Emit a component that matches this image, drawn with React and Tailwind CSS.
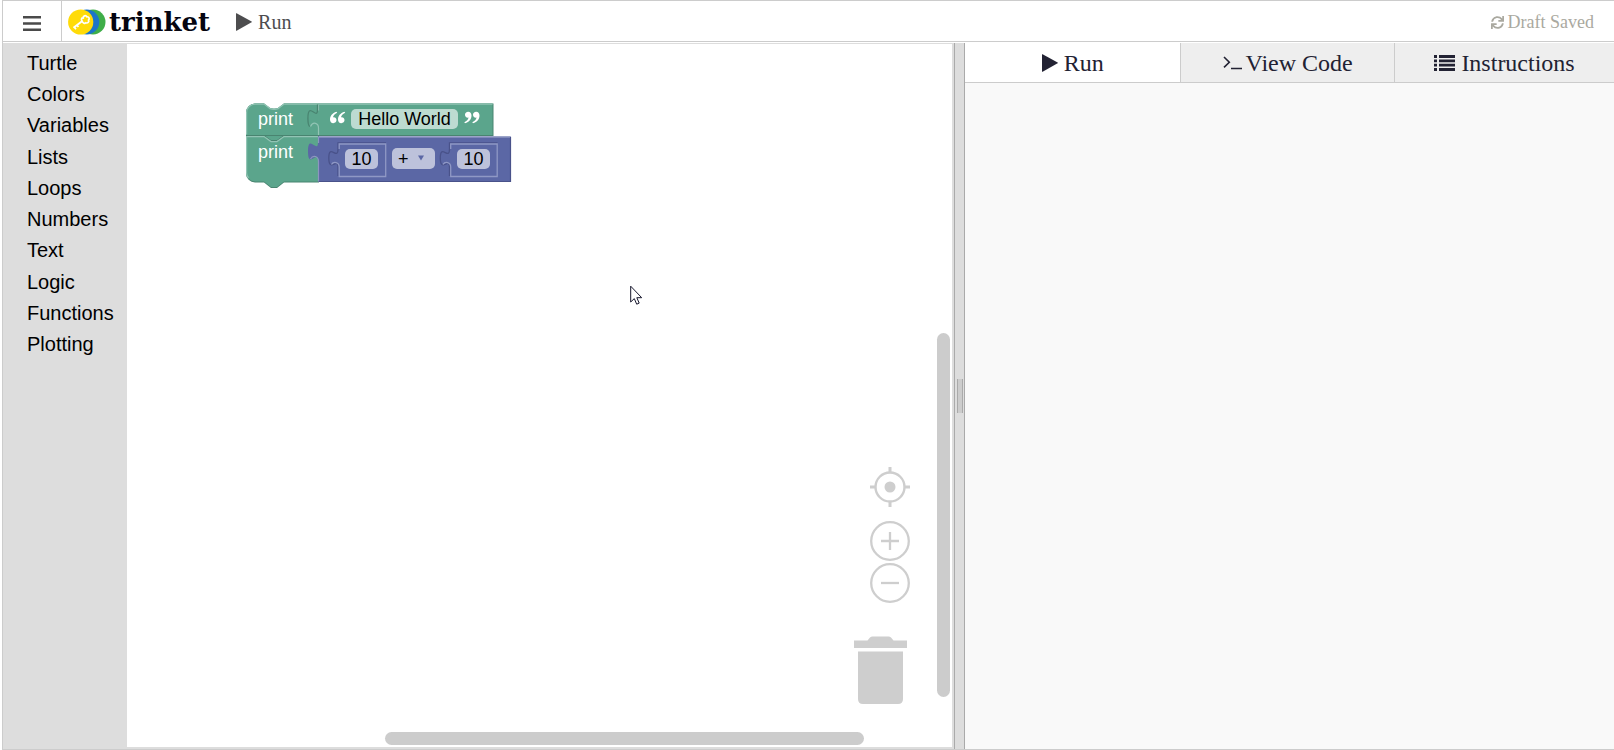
import React from 'react';
import { FaSync } from 'react-icons/fa';

const CATEGORIES = ['Turtle', 'Colors', 'Variables', 'Lists', 'Loops', 'Numbers', 'Text', 'Logic', 'Functions', 'Plotting'];

function PlayIcon({ className }) {
  return (
    <svg className={className} viewBox="0 0 16 18" fill="currentColor" aria-hidden="true">
      <path d="M0 .6Q0 0 .6.3L15.6 8.5q.5.4 0 .8L.6 17.7Q0 18 0 17.4Z" />
    </svg>
  );
}

function TerminalIcon() {
  return (
    <svg className="h-[14px] w-[19px]" viewBox="0 0 19 14" fill="none" stroke="currentColor" strokeWidth="1.6" aria-hidden="true">
      <path d="M1 1l5.3 5.2L1 11.4M8 12.5h11" />
    </svg>
  );
}

function ListIcon() {
  return (
    <svg className="h-[16px] w-[21px]" viewBox="0 0 21 16" fill="currentColor" aria-hidden="true">
      <path d="M0 0h3v3H0zM5 0h16v3H5zM0 4.4h3v2.8H0zM5 4.4h16v2.8H5zM0 8.7h3v2.8H0zM5 8.7h16v2.8H5zM0 13h3v3H0zM5 13h16v3H5z" />
    </svg>
  );
}

function Logo() {
  return (
    <a href="#home" className="flex items-center gap-[3px]">
      <svg className="h-[26px] w-[38px]" viewBox="0 0 38 26" aria-hidden="true">
        <circle cx="25" cy="13" r="12.5" fill="#3fae49" />
        <circle cx="18.8" cy="13" r="12.5" fill="#1b75c9" />
        <circle cx="12.7" cy="13" r="12.6" fill="#ffdb08" />
        <g fill="none" stroke="#fff">
          <path d="M14 12.2L5.500 18.800" strokeWidth="2" />
          <path d="M6.200 18l1.800 2.300M8.800 16l1.600 2.100" strokeWidth="1.700" />
          <path d="M14.200 12.200c-1.500-1.600-.6-3.500 1-3.200-.2-2.300 2.600-3.100 3.700-1.200 2.100-.3 3 2 1.600 3.300 1 1.900-1 3.500-2.700 2.600-1 1.200-2.900.5-3.600-1.500z" strokeWidth="1.700" />
        </g>
      </svg>
      <span className="font-['DejaVu_Serif',serif] text-[26px] leading-[40px] font-bold text-[#050510]">trinket</span>
    </a>
  );
}

function Header() {
  return (
    <header className="flex h-[42px] shrink-0 items-stretch border-y border-[#ccc] bg-white">
      <button type="button" aria-label="Menu" className="flex w-[59px] items-center justify-center border-r border-[#ccc] pt-1 text-[#4a4a4a]">
        <svg className="h-[15px] w-[18px]" viewBox="0 0 18 15" fill="currentColor" aria-hidden="true">
          <path d="M0 0h18v2.600H0zM0 6.200h18v2.600H0zM0 12.400h18V15H0z" />
        </svg>
      </button>
      <div className="flex items-center pt-px pl-[6px]">
        <Logo />
      </div>
      <button type="button" className="ml-[26px] flex items-center gap-[6px] pt-[2px] text-[20px] leading-6 text-[#4d4d4f]">
        <PlayIcon className="h-[18px] w-[16px]" />
        Run
      </button>
      <div className="ml-auto flex items-center gap-[4px] pt-[2px] pr-5 text-[18px] text-[#aaa9a0]">
        <FaSync className="size-[13px]" />
        Draft Saved
      </div>
    </header>
  );
}

function Toolbox() {
  return (
    <nav aria-label="Blocks" className="w-[124px] shrink-0 bg-[#ddd] pt-1">
      <ul className="flex h-[313px] flex-col">
        {CATEGORIES.map((name) => (
          <li key={name} className="flex flex-1 items-center">
            <button type="button" className="pl-6 font-['Liberation_Sans',sans-serif] text-[20px] leading-[30px] text-black">
              {name}
            </button>
          </li>
        ))}
      </ul>
    </nav>
  );
}

function BlockShapes() {
  return (
    <svg className="absolute inset-0 size-full" viewBox="240 98 280 95" aria-hidden="true">
      <path d="M246 136H319V182.500H284l-7 5.500h-6l-7-5.500H255a9 9 0 0 1-9-9Z" fill="#498470" />
      <path d="M246 112.500a9 9 0 0 1 9-9h9l6 4.500q4 1.500 8 0l6-4.500H493.500V136H246Z" fill="#498470" />
      <path d="M246 112.500a9 9 0 0 1 9-9h9l6 4.500q4 1.500 8 0l6-4.500H492.500V135H246Z" fill="#5ba58c" />
      <path d="M246 136H318V181.500H284l-7 5.500h-6l-7-5.500H255a9 9 0 0 1-9-9Z" fill="#5ba58c" />
      <path d="M264 136.500l7 5h6l7-5Z" fill="#5ba58c" />
      <path d="M246 135.500H264l7 5h6l7-5h34" fill="none" stroke="#498470" />
      <g fill="none" stroke="#92c4b4" strokeWidth="1.200">
        <path d="M246.600 134.500V112.500a8.500 8.500 0 0 1 8.500-8.400h9l6 4.500q4 1.500 8 0l6-4.500H492.500" />
        <path d="M248.500 178a8.500 8.500 0 0 1-1.900-6V136.600H264l7 5h6l7-5h34" />
        <path d="M318.500 104.500v6M310.500 126.500c2.500-5.500 8-3.500 8 1.500V135" />
      </g>
      <path d="M317.500 104.500v5c0 12-9.600-9.600-9.600 9 0 5.500.8 7.500 2 8" fill="none" stroke="#498470" strokeWidth="1.300" />

      <path d="M318 136.500V142.500c0 12-10-9.600-10 9s10-3 10 9V182H511V136.500Z" fill="#5b67a5" />
      <path d="M318 181.500H510.500V137" fill="none" stroke="#49528a" strokeWidth="1.200" />
      <path d="M318.500 143V137.100H510M310.500 159c2.500-4.500 8-3 8 2.500V181.500" fill="none" stroke="#8c95c0" strokeWidth="1.200" />
      {[339, 450.5].map((x) => (
        <g key={x} fill="none" strokeWidth="1.300">
          <path d={`M${x - 1} 176V167c0-10-9.200 6-9.200-9s9.200 3 9.200-9V142.800h48`} stroke="#49528a" />
          <path d={`M${x + .2} 149V144h46.500V176.500H${x + .2}V167M${x - 7.500} 164.500c2-3.500 7.700-2.500 7.700 2.500`} stroke="#8f98c5" />
        </g>
      ))}

      <g fill="#fff">
        <path d="M336.500 111.700c-4.300 1.400-6.500 4.300-6.500 7.800 0 2.300 1.400 3.700 3.300 3.700s3.200-1.300 3.200-3.100c0-1.700-1.200-2.900-2.700-2.900-.3 0-.6 0-.8.1.3-2 1.700-3.500 4.200-4.600z" />
        <path d="M344.500 111.700c-4.300 1.400-6.500 4.300-6.500 7.800 0 2.300 1.400 3.700 3.300 3.700s3.200-1.300 3.200-3.100c0-1.700-1.200-2.900-2.700-2.900-.3 0-.6 0-.8.1.3-2 1.700-3.500 4.200-4.600z" />
        <path d="M465 123.200c4.300-1.400 6.500-4.300 6.500-7.800 0-2.300-1.400-3.700-3.300-3.700s-3.200 1.300-3.200 3.100c0 1.700 1.200 2.900 2.700 2.900.3 0 .6 0 .8-.1-.3 2-1.700 3.500-4.200 4.600z" />
        <path d="M473 123.200c4.300-1.400 6.500-4.300 6.500-7.800 0-2.300-1.400-3.700-3.300-3.700s-3.200 1.300-3.200 3.100c0 1.700 1.200 2.900 2.700 2.900.3 0 .6 0 .8-.1-.3 2-1.700 3.500-4.200 4.600z" />
      </g>
    </svg>
  );
}

function Blocks() {
  return (
    <div className="absolute top-[54px] left-[113px] h-[95px] w-[280px] font-['Liberation_Sans',sans-serif] text-[18px] leading-5 text-black">
      <BlockShapes />
      <span className="absolute top-[11px] left-[18px] text-white">print</span>
      <input aria-label="Text" defaultValue="Hello World" className="absolute top-[11px] left-[111px] h-[20px] w-[107px] rounded-[5px] bg-[#bddbd1] text-center" />
      <span className="absolute top-[44px] left-[18px] text-white">print</span>
      <input aria-label="First number" defaultValue="10" className="absolute top-[51px] left-[105px] h-[20px] w-[33px] rounded-[5px] bg-[#bdc2db] text-center" />
      <select aria-label="Operator" className="absolute top-[50px] left-[152px] h-[21px] w-[43px] appearance-none rounded-[5px] bg-[#bdc2db] pl-[6px]">
        <option>+</option>
        <option>-</option>
        <option>×</option>
        <option>÷</option>
      </select>
      <svg className="pointer-events-none absolute top-[57px] left-[178px] h-[6px] w-[6px]" viewBox="0 0 7 6" fill="#5b67a5" aria-hidden="true">
        <path d="M0 0h7L3.500 6z" />
      </svg>
      <input aria-label="Second number" defaultValue="10" className="absolute top-[51px] left-[217px] h-[20px] w-[33px] rounded-[5px] bg-[#bdc2db] text-center" />
    </div>
  );
}

function CanvasControls() {
  return (
    <div className="absolute right-[42px] bottom-[43px] flex flex-col items-end text-[#cecece]">
      <button type="button" aria-label="Center" className="mb-[14px]">
        <svg className="block size-10" viewBox="0 0 40 40" fill="none" stroke="currentColor" strokeWidth="2.400" aria-hidden="true">
          <circle cx="20" cy="20" r="14.500" />
          <path d="M20 0v6M20 34v6M0 20h6M34 20h6" strokeWidth="3" />
          <circle cx="20" cy="20" r="5.500" fill="currentColor" stroke="none" />
        </svg>
      </button>
      <button type="button" aria-label="Zoom in" className="mb-[2px]">
        <svg className="block size-10" viewBox="0 0 40 40" fill="none" stroke="currentColor" strokeWidth="2.300" aria-hidden="true">
          <circle cx="20" cy="20" r="18.800" />
          <path d="M20 11v18M11 20h18" />
        </svg>
      </button>
      <button type="button" aria-label="Zoom out" className="mb-[33px]">
        <svg className="block size-10" viewBox="0 0 40 40" fill="none" stroke="currentColor" strokeWidth="2.300" aria-hidden="true">
          <circle cx="20" cy="20" r="18.800" />
          <path d="M11 20h18" />
        </svg>
      </button>
      <button type="button" aria-label="Trash" className="mr-[3px]">
        <svg className="block h-[68px] w-[53px]" viewBox="0 0 53 68" fill="currentColor" aria-hidden="true">
          <path d="M0 4.500h13.500L16 1.500Q17 .5 18.500.5h16q1.500 0 2.500 1l2.500 3H53V12H0zM4 15.500h45V63q0 5-5 5H9q-5 0-5-5z" />
        </svg>
      </button>
    </div>
  );
}

function MousePointer() {
  return (
    <svg className="absolute top-[241px] left-[503px] h-[21px] w-[13px]" viewBox="0 0 13 21" aria-hidden="true">
      <path d="M.7 1.200V17l3.600-3.400 2.400 5.600 2.500-1.100-2.400-5.400h4.900z" fill="#fff" stroke="#15152b" strokeWidth="1" />
    </svg>
  );
}

function Workspace() {
  return (
    <section aria-label="Workspace" className="flex min-w-0 flex-1 border-t border-r-2 border-b-2 border-[#ddd]">
      <div className="relative flex-1 overflow-hidden bg-white">
        <Blocks />
        <MousePointer />
        <CanvasControls />
        <div className="absolute top-[289px] right-[2px] bottom-[50px] w-[13px] rounded-full bg-[#ccc]" />
        <div className="absolute right-[88px] bottom-[2px] left-[258px] h-[13px] rounded-full bg-[#ccc]" />
      </div>
    </section>
  );
}

function Output() {
  const tab = 'flex items-center justify-center text-[24px] leading-[38px]';
  return (
    <section className="flex min-w-0 flex-1 flex-col bg-[#f9f9f9]">
      <div role="tablist" className="grid h-[40px] shrink-0 grid-cols-[215fr_214fr_220fr] border-b border-[#ccc] text-[#222233]">
        <button type="button" role="tab" aria-selected="true" className={`${tab} gap-[6px] bg-white`}>
          <PlayIcon className="h-[18px] w-[16px]" />
          Run
        </button>
        <button type="button" role="tab" aria-selected="false" className={`${tab} gap-[4px] border-l border-[#ccc] bg-[#eee]`}>
          <TerminalIcon />
          View Code
        </button>
        <button type="button" role="tab" aria-selected="false" className={`${tab} gap-[6px] border-l border-[#ccc] bg-[#eee]`}>
          <ListIcon />
          Instructions
        </button>
      </div>
      <div role="tabpanel" aria-label="Run" className="flex-1" />
    </section>
  );
}

export default function App() {
  return (
    <div className="h-screen bg-white pl-[2px] font-['Liberation_Serif',serif]">
      <div className="flex h-full flex-col border-b border-l border-[#ccc]">
        <Header />
        <main className="flex min-h-0 flex-1 pt-px">
          <div className="flex w-[59.05%] shrink-0">
            <Toolbox />
            <Workspace />
          </div>
          <div role="separator" aria-orientation="vertical" className="flex w-[11px] shrink-0 items-center justify-center border-x border-[#aaa] bg-[#ddd]">
            <div className="h-[34px] w-[6px] border-x border-[#aaa] bg-[#ccc]" />
          </div>
          <Output />
        </main>
      </div>
    </div>
  );
}
